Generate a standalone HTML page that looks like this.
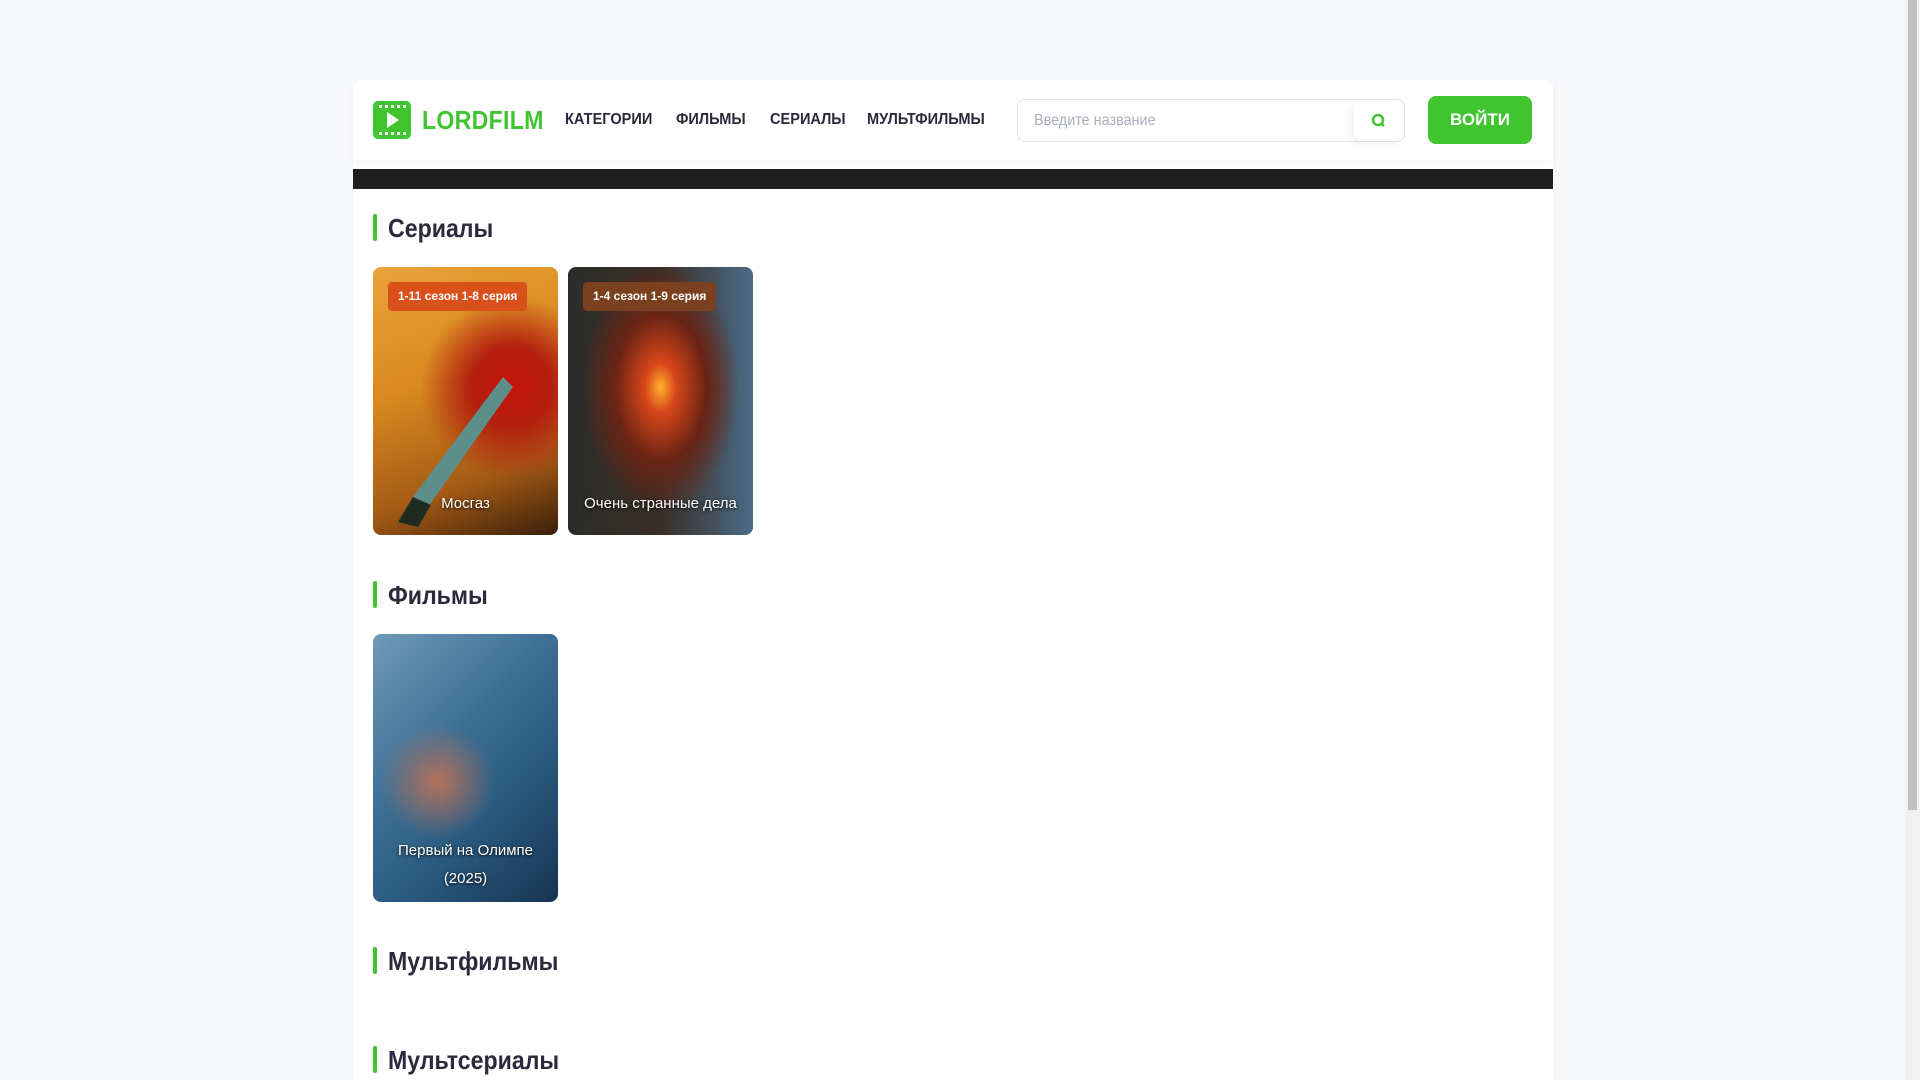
<!DOCTYPE html>
<html><head><meta charset="utf-8"><style>
*{box-sizing:border-box;margin:0;padding:0}
body{width:1920px;height:1080px;overflow:hidden;background:#f7f8fa;font-family:"Liberation Sans",sans-serif;position:relative}
.sb{position:absolute;right:0;top:0;width:15px;height:1080px;background:#f1f1f1}
.sb i{position:absolute;left:3px;top:0;width:9px;height:810px;background:#c1c1c1;border-radius:0}
.wrap{position:absolute;left:353px;top:80px;width:1200px;height:1000px;background:#fff;border-radius:8px 8px 0 0}
.hdr{position:absolute;left:0;top:0;width:1200px;height:80px;box-shadow:0 4px 8px rgba(0,0,0,.04)}
.logo{position:absolute;left:20px;top:21px;width:38px;height:38px;background:#40c430;border-radius:5px}
.lt{position:absolute;left:69px;top:25px;font-size:26px;font-weight:bold;color:#40c430;letter-spacing:.3px;transform:scaleX(.89);transform-origin:left}
.nav{position:absolute;top:31px;font-size:16px;font-weight:bold;color:#2a2a3c;transform:scaleX(.91);transform-origin:left}
.srch{position:absolute;left:664px;top:19px;width:388px;height:43px;border:1px solid #e5e7eb;border-radius:8px}
.srch span{position:absolute;left:16px;top:12px;font-size:16px;color:#a8adb8;transform:scaleX(.9);transform-origin:left}
.sbtn{position:absolute;right:0;top:0;width:50px;height:41px;background:#fff;border-radius:8px;box-shadow:-3px 3px 8px rgba(0,0,0,.07)}
.btn{position:absolute;left:1075px;top:16px;width:104px;height:48px;background:#40c430;border-radius:8px;color:#fff;font-weight:bold;font-size:17px;text-align:center;line-height:48px}
.bar{position:absolute;left:0;top:89px;width:1200px;height:20px;background:#1f1f1f}
.h{position:absolute;left:20px;font-size:26px;font-weight:bold;color:#2a2a3c;padding-left:15px}
.h span{display:inline-block;transform:scaleX(.89);transform-origin:left}
.h:before{content:"";position:absolute;left:0;top:1px;width:4px;height:27px;background:#40c430;border-radius:2px}
.card{position:absolute;width:185px;border-radius:8px;overflow:hidden}
.badge{position:absolute;left:15px;top:15px;height:29px;padding:0 10px;line-height:29px;font-size:12px;font-weight:bold;color:#fff;border-radius:4px}
.t{position:absolute;left:0;width:100%;text-align:center;color:#fff;font-size:15px;text-shadow:0 1px 3px #000}
</style></head><body>
<div class="sb"><i></i></div>
<div class="wrap">
<div class="hdr">
<div class="logo"><svg width="38" height="38"><g fill="#fff"><rect x="6" y="4" width="3" height="3"/><rect x="12" y="4" width="3" height="3"/><rect x="18" y="4" width="3" height="3"/><rect x="24" y="4" width="3" height="3"/><rect x="30" y="4" width="3" height="3"/><rect x="6" y="31" width="3" height="3"/><rect x="12" y="31" width="3" height="3"/><rect x="18" y="31" width="3" height="3"/><rect x="24" y="31" width="3" height="3"/><rect x="30" y="31" width="3" height="3"/><path d="M14 11 L26 19 L14 27Z"/></g></svg></div>
<div class="lt">LORDFILM</div>
<div class="nav" style="left:212px">КАТЕГОРИИ</div>
<div class="nav" style="left:323px">ФИЛЬМЫ</div>
<div class="nav" style="left:417px">СЕРИАЛЫ</div>
<div class="nav" style="left:514px">МУЛЬТФИЛЬМЫ</div>
<div class="srch"><span>Введите название</span><div class="sbtn"><svg width="50" height="41"><circle cx="24" cy="20" r="5" fill="none" stroke="#40c430" stroke-width="2.5"/><path d="M27 23 L30 26" stroke="#40c430" stroke-width="2.5"/></svg></div></div>
<div class="btn">ВОЙТИ</div>
</div>
<div class="bar"></div>
<div class="h" style="top:133px"><span>Сериалы</span></div>
<div class="card" style="left:20px;top:187px;height:268px;background:radial-gradient(circle at 75% 45%,#c5120c 0,#b3200f 20%,transparent 45%),linear-gradient(160deg,#e9a23a,#d98a20 40%,#a45a15 75%,#3a200a)">
<svg width="185" height="268" style="position:absolute;left:0;top:0"><path d="M130 110 L40 230 L55 240 L140 120Z" fill="#5d8f8a"/><path d="M40 230 L25 255 L45 260 L58 238Z" fill="#1e2a22"/></svg>
<div class="badge" style="background:#d9501a">1-11 сезон 1-8 серия</div>
<div class="t" style="top:228px">Мосгаз</div></div>
<div class="card" style="left:215px;top:187px;height:268px;background:radial-gradient(ellipse at 50% 45%,#ffb02a 0,#d8461a 12%,#6a2414 35%,transparent 60%),linear-gradient(90deg,#2b2d2a,#3a2e26 50%,#4b6b88)">
<div class="badge" style="background:#7a4020">1-4 сезон 1-9 серия</div>
<div class="t" style="top:228px">Очень странные дела</div></div>
<div class="h" style="top:500px"><span>Фильмы</span></div>
<div class="card" style="left:20px;top:554px;height:268px;background:radial-gradient(circle at 35% 55%,#b4705a 0,transparent 30%),linear-gradient(135deg,#6f9ab8,#3d6f95 40%,#2a5a80 65%,#163450)">
<div class="t" style="top:203px;line-height:28px">Первый на Олимпе<br>(2025)</div></div>
<div class="h" style="top:866px"><span>Мультфильмы</span></div>
<div class="h" style="top:965px"><span>Мультсериалы</span></div>
</div>
</body></html>
